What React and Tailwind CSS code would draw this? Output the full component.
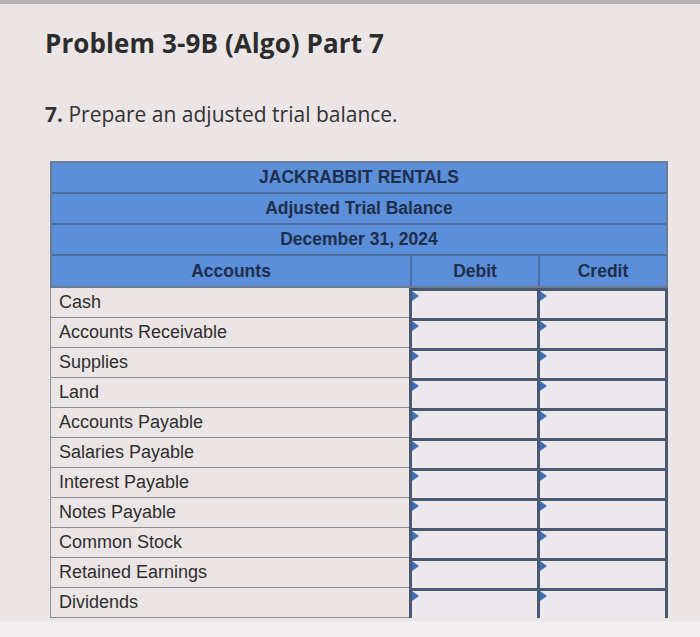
import React from "react";

const accounts = [
  "Cash",
  "Accounts Receivable",
  "Supplies",
  "Land",
  "Accounts Payable",
  "Salaries Payable",
  "Interest Payable",
  "Notes Payable",
  "Common Stock",
  "Retained Earnings",
  "Dividends",
];

const InputCell = ({ last }) => (
  <div
    className={`relative h-full border-l-[3px] border-t-[3px] border-[#4b5872] bg-[#ece7ea] ${
      last ? "border-r-[3px]" : ""
    }`}
  >
    {/* blue flag marker */}
    <span className="absolute left-0 top-0 w-0 h-0 border-y-[5px] border-y-transparent border-l-[7px] border-l-[#3f6fb8]" />
  </div>
);

export default function App() {
  return (
    <div className="w-[700px] h-[637px] bg-[#ebe5e6] overflow-hidden font-['Liberation_Sans',Arial,sans-serif] text-[#2a2a2a]">
      <div className="h-[4px] bg-[#b7b2b6]" />
      <div className="px-[45px] pt-[22px]">
        <h1 className="font-['Open_Sans',sans-serif] font-bold text-[26px] leading-[34px] text-[#2c2c2c] tracking-[0.1px]">
          Problem 3-9B (Algo) Part 7
        </h1>
        <p className="mt-[40px] font-['Open_Sans',sans-serif] text-[21px] leading-[28px] text-[#333]">
          <span className="font-bold">7.</span> Prepare an adjusted trial balance.
        </p>
      </div>

      <div className="ml-[50px] mt-[33px] w-[618px]">
        {/* heading */}
        <div className="bg-[#5b8fd9] border-2 border-[#6b7c96] font-bold text-[17.5px] text-[#1f2e4b]">
          <div className="h-[31px] flex items-center justify-center border-b-2 border-[#4d6d9a]">JACKRABBIT RENTALS</div>
          <div className="h-[31px] flex items-center justify-center border-b-2 border-[#4d6d9a]">Adjusted Trial Balance</div>
          <div className="h-[31px] flex items-center justify-center border-b-2 border-[#4d6d9a]">December 31, 2024</div>
          <div className="h-[30px] grid grid-cols-[358px_128px_1fr]">
            <div className="flex items-center justify-center">Accounts</div>
            <div className="flex items-center justify-center border-l-2 border-[#4d6d9a]">Debit</div>
            <div className="flex items-center justify-center border-l-2 border-[#4d6d9a]">Credit</div>
          </div>
        </div>

        {/* rows */}
        {accounts.map((name) => (
          <div key={name} className="h-[30px] grid grid-cols-[359px_128px_1fr]">
            <div className="flex items-center px-[8px] border-l border-b border-[#8e8e92] text-[18px] text-[#2e2e2e]">
              {name}
            </div>
            <InputCell />
            <InputCell last />
          </div>
        ))}
      </div>
      <div className="mt-[3px] h-[30px] bg-[#f1eeef]" />
    </div>
  );
}
